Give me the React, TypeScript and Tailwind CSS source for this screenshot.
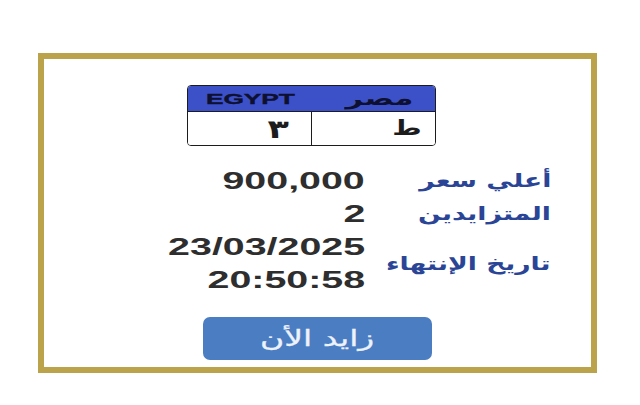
import React from 'react'

const AR = { fontFamily: '"DejaVu Sans", "Noto Sans", sans-serif' }
const EN = { fontFamily: '"Liberation Sans", Arial, sans-serif' }

type Row = { label: string; values: string[] }

const ROWS: Row[] = [
  { label: 'أعلي سعر', values: ['900,000'] },
  { label: 'المتزايدين', values: ['2'] },
  { label: 'تاريخ الإنتهاء', values: ['23/03/2025', '20:50:58'] },
]

function Plate() {
  return (
    <div className="mt-[26px] ml-[143px] w-[249px] h-[61px] rounded-[4px] border-[1.5px] border-[#1c1c1c] overflow-hidden flex flex-col">
      <div className="h-[26px] bg-[#3c50c8] flex border-b-[1.5px] border-[#1c1c1c]">
        <div className="w-[124px] flex items-center justify-center">
          <span style={EN} className="inline-block font-bold text-[15px] leading-none text-[#0d1030] scale-x-[1.75] [-webkit-text-stroke:0.4px_#0d1030]">EGYPT</span>
        </div>
        <div className="flex-1 flex items-center justify-end pr-[22px]">
          <span dir="rtl" style={AR} className="inline-block font-bold text-[19px] leading-none text-[#0d1030] scale-x-[1.6] origin-right">مصر</span>
        </div>
      </div>
      <div className="flex-1 flex bg-white">
        <div className="w-[124px] border-r-[1.5px] border-[#1c1c1c] flex items-center justify-end pr-[22px]">
          <span dir="rtl" style={AR} className="inline-block font-bold text-[26px] leading-none text-[#1c1c1c] scale-x-[1.35] origin-right">٣</span>
        </div>
        <div className="flex-1 flex items-center justify-end pr-[13px]">
          <span dir="rtl" style={AR} className="inline-block font-bold text-[21px] leading-none text-[#1c1c1c] scale-x-[1.35] origin-right">ط</span>
        </div>
      </div>
    </div>
  )
}

export default function App() {
  return (
    <div className="w-[640px] h-[405px] bg-white pt-[53px] pl-[38px]">
      <div className="w-[559px] h-[320px] border-[6px] border-[#bba34c] bg-white flex flex-col">
        <Plate />

        <div className="mt-[18px] grid grid-cols-[321px_186px]">
          {ROWS.map((row) => (
            <React.Fragment key={row.label}>
              <div className="flex flex-col items-end">
                {row.values.map((v) => (
                  <span key={v} style={EN} className="inline-block font-bold text-[24px] leading-[33px] text-[#2e2e2e] scale-x-[1.64] origin-right">
                    {v}
                  </span>
                ))}
              </div>
              <div className="flex items-center justify-end">
                <span dir="rtl" style={AR} className="inline-block font-bold text-[19px] leading-[33px] text-[#2b4596] scale-x-[1.4] origin-right">
                  {row.label}
                </span>
              </div>
            </React.Fragment>
          ))}
        </div>

        <button className="mt-[21px] ml-[159px] w-[229px] h-[43px] rounded-[7px] bg-[#4a7dc2] flex items-center justify-center">
          <span dir="rtl" style={AR} className="inline-block text-[22px] leading-none text-[#eef2fb] scale-x-[1.5] [-webkit-text-stroke:0.3px_#eef2fb]">زايد الأن</span>
        </button>
      </div>
    </div>
  )
}
